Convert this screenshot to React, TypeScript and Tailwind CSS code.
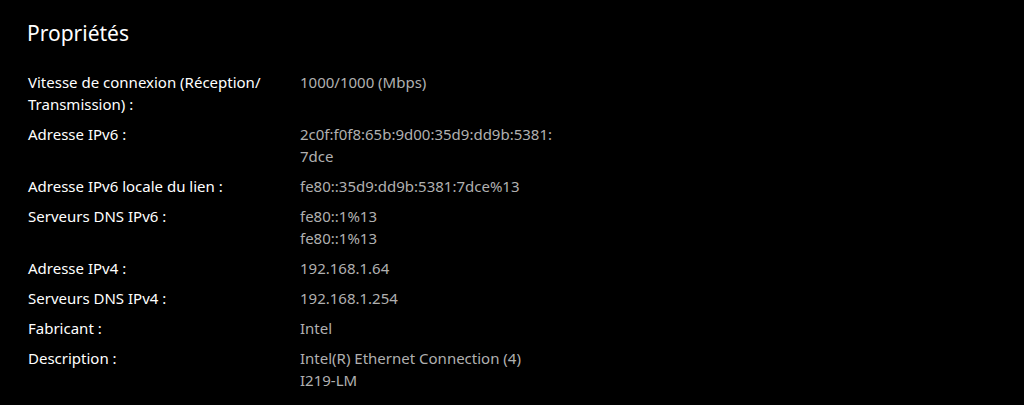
const rows: { label: string[]; value: string[] }[] = [
  {
    label: ["Vitesse de connexion (Réception/", "Transmission) :"],
    value: ["1000/1000 (Mbps)"],
  },
  {
    label: ["Adresse IPv6 :"],
    value: ["2c0f:f0f8:65b:9d00:35d9:dd9b:5381:", "7dce"],
  },
  {
    label: ["Adresse IPv6 locale du lien :"],
    value: ["fe80::35d9:dd9b:5381:7dce%13"],
  },
  { label: ["Serveurs DNS IPv6 :"], value: ["fe80::1%13", "fe80::1%13"] },
  { label: ["Adresse IPv4 :"], value: ["192.168.1.64"] },
  { label: ["Serveurs DNS IPv4 :"], value: ["192.168.1.254"] },
  { label: ["Fabricant :"], value: ["Intel"] },
  {
    label: ["Description :"],
    value: ["Intel(R) Ethernet Connection (4)", "I219-LM"],
  },
  { label: ["Version du pilote :"], value: ["12.19.1.37"] },
];

export default function App() {
  return (
    <div
      className="w-[1024px] h-[405px] overflow-hidden bg-black text-white pl-[27px] pt-[19px]"
      style={{ fontFamily: '"Noto Sans", "Open Sans", sans-serif' }}
    >
      <h1 className="text-[21px] leading-[28px] font-normal">Propriétés</h1>
      <div className="mt-[24px] flex flex-col gap-[8px] text-[15px] leading-[22px]">
        {rows.map((row) => (
          <div key={row.label[0]} className="flex">
            <div className="w-[273px] pl-px shrink-0">
              {row.label.map((line) => (
                <div key={line}>{line}</div>
              ))}
            </div>
            <div className="text-[#b0b0b0]">
              {row.value.map((line, i) => (
                <div key={i}>{line}</div>
              ))}
            </div>
          </div>
        ))}
      </div>
    </div>
  );
}
